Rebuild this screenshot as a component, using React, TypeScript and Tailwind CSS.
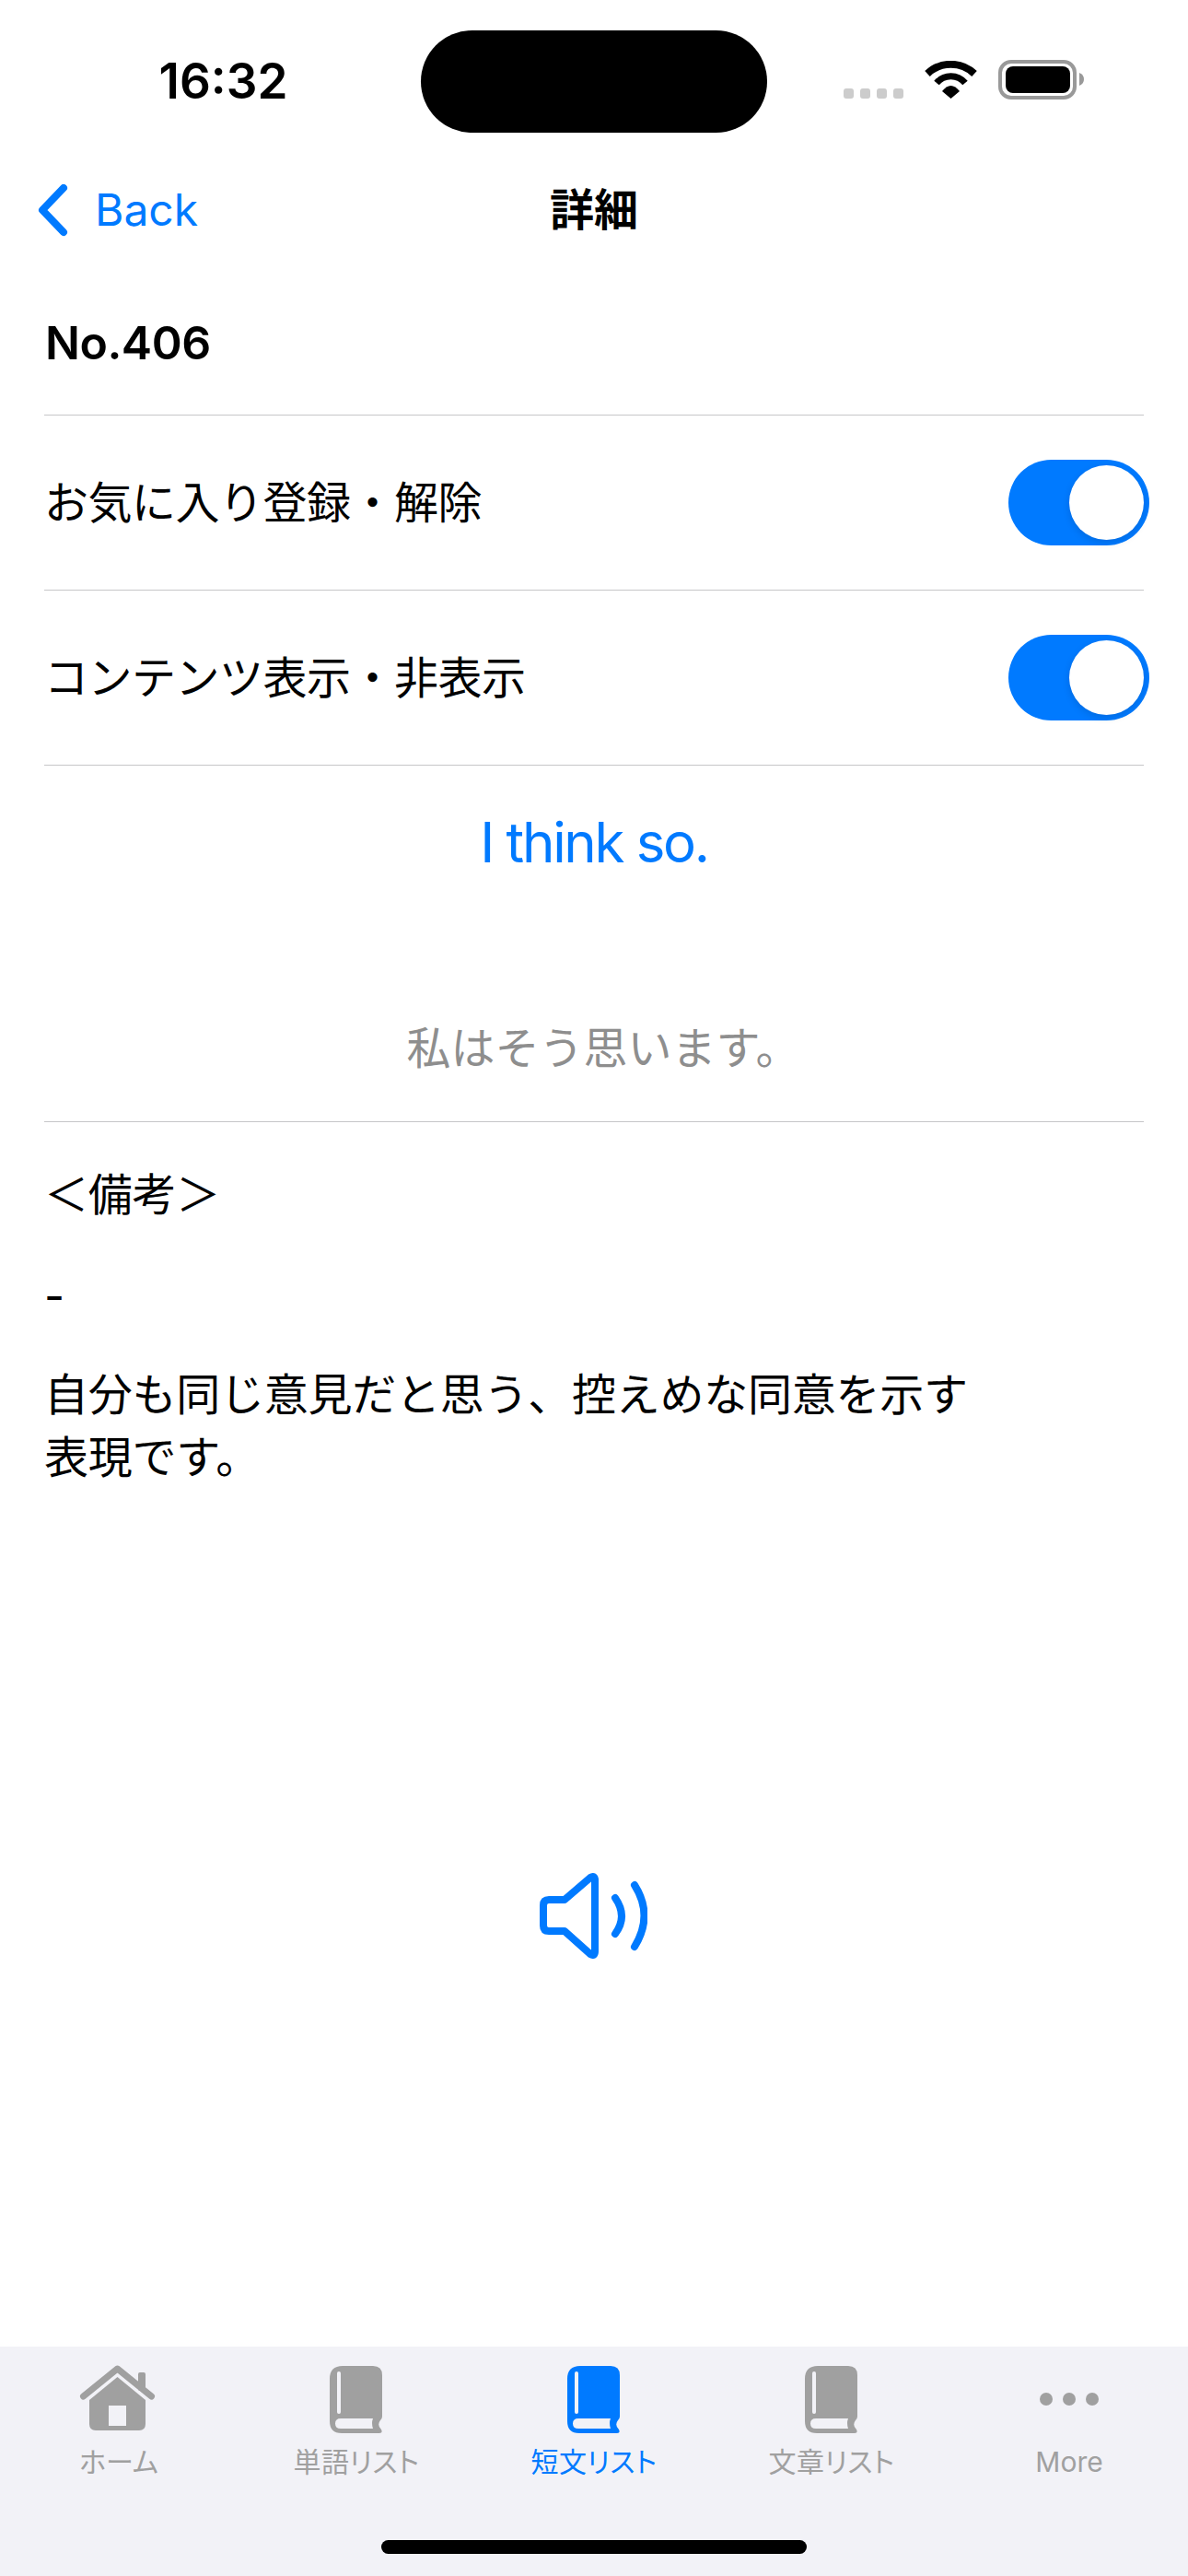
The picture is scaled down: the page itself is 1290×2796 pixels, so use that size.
import React from "react";

const JP = "font-['Inter','Noto_Sans_CJK_JP',sans-serif]";

const Toggle = () => (
  <div className="flex h-[93px] w-[153px] items-center justify-end rounded-full bg-[#007aff] pr-[6px]">
    <div className="h-[81px] w-[81px] rounded-full bg-white shadow-[0_3px_8px_rgba(0,0,0,0.12)]" />
  </div>
);

const Separator = () => <div className="h-px bg-[#c6c6c8]" />;

const BookIcon = ({ color }: { color: string }) => (
  <svg className="mr-[2px]" width="57" height="73" viewBox="0 0 57 73">
    <path
      d="M14 0H47Q57 0 57 10V55Q57 57 55 59Q51 64 56 69Q58 73 54 73H13Q0 73 0 60V14Q0 0 14 0Z"
      fill={color}
    />
    <rect x="8" y="6" width="4" height="46" rx="2" fill="#f2f2f7" />
    <path d="M12 57H47Q45 62 47 68H12Q6 68 6 62.5Q6 57 12 57Z" fill="#f2f2f7" />
  </svg>
);

const HomeIcon = () => (
  <svg width="86" height="76" viewBox="0 0 86 76" fill="#a0a0a0">
    <path d="M4.5 35L41.5 5L78.5 35" fill="none" stroke="#a0a0a0" strokeWidth="7" strokeLinecap="round" strokeLinejoin="round" />
    <rect x="64" y="9" width="8" height="20" rx="2" />
    <path d="M41.5 14L72 39V65Q72 72 65 72H18Q11 72 11 65V39Z" />
    <rect x="32" y="45" width="19" height="22" fill="#f2f2f7" />
  </svg>
);

const DotsIcon = () => (
  <svg width="64" height="14" viewBox="0 0 64 14" fill="#a0a0a0">
    <circle cx="7" cy="7" r="7" />
    <circle cx="32" cy="7" r="7" />
    <circle cx="57" cy="7" r="7" />
  </svg>
);

const tabs = [
  { label: "ホーム", icon: <HomeIcon />, color: "text-[#a0a0a0]" },
  { label: "単語リスト", icon: <BookIcon color="#a0a0a0" />, color: "text-[#a0a0a0] tracking-[0.5px]" },
  { label: "短文リスト", icon: <BookIcon color="#007aff" />, color: "text-[#007aff] tracking-[0.5px]" },
  { label: "文章リスト", icon: <BookIcon color="#a0a0a0" />, color: "text-[#a0a0a0] tracking-[0.5px]" },
  { label: "More", icon: <DotsIcon />, color: "text-[#a0a0a0]" },
];

export default function App() {
  return (
    <div className={`flex h-[2796px] w-[1290px] flex-col bg-white text-black ${JP}`}>
      {/* Status bar */}
      <div className="flex h-[176px] items-start">
        <div className="flex h-[177px] w-[457px] items-start justify-center pt-[49px] pl-[28px] text-[53px] leading-[78px] font-semibold">
          16:32
        </div>
        <div className="mt-[33px] h-[111px] w-[376px] rounded-full bg-black" />
        <div className="flex items-end pt-[65px] pl-[83px]">
          <div className="flex gap-[7px] pb-[1px]">
            <div className="h-[11px] w-[11px] rounded-[3px] bg-[#cccccc]" />
            <div className="h-[11px] w-[11px] rounded-[3px] bg-[#cccccc]" />
            <div className="h-[11px] w-[11px] rounded-[3px] bg-[#cccccc]" />
            <div className="h-[11px] w-[11px] rounded-[3px] bg-[#cccccc]" />
          </div>
          <svg className="mb-[1px] ml-[23px]" width="57" height="41" viewBox="0 0 57 41">
            <path d="M3 14A37 37 0 0 1 54 14" fill="none" stroke="#000" strokeWidth="8" />
            <path d="M13 24A20 20 0 0 1 44 24" fill="none" stroke="#000" strokeWidth="7" />
            <path d="M28.5 41L19 33Q28.5 21 38 33Z" fill="#000" />
          </svg>
          <svg className="ml-[23px]" width="93" height="43" viewBox="0 0 93 43">
            <rect x="2" y="2" width="81" height="39" rx="12" fill="none" stroke="#999999" strokeWidth="4" />
            <rect x="8" y="7" width="70" height="29" rx="8" fill="#000" />
            <path d="M88 14Q93 16 93 21Q93 26 88 28Z" fill="#999999" />
          </svg>
        </div>
      </div>

      {/* Nav bar */}
      <div className="grid h-[104px] grid-cols-3 items-center">
        <div className="flex items-center pl-[40px] text-[48px] text-[#007aff]">
          <svg width="34" height="57" viewBox="0 0 34 57">
            <path d="M29 4L6 28L29 52" fill="none" stroke="#007aff" strokeWidth="8" strokeLinecap="round" strokeLinejoin="round" />
          </svg>
          <span className="ml-[29px]">Back</span>
        </div>
        <div className="text-center text-[48px] font-bold">詳細</div>
      </div>

      {/* Content */}
      <div className="flex flex-1 flex-col px-[48px]">
        <div className="flex h-[170px] items-center pt-[14px] pl-[1px] text-[50px] font-semibold tracking-[-0.5px]">No.406</div>
        <Separator />
        <div className="flex h-[189px] items-center justify-between text-[48px] tracking-[-0.5px]">
          <span>お気に入り登録・解除</span>
          <div className="mr-[-6px]"><Toggle /></div>
        </div>
        <Separator />
        <div className="flex h-[189px] items-center justify-between text-[48px] tracking-[-0.5px]">
          <span>コンテンツ表示・非表示</span>
          <div className="mr-[-6px]"><Toggle /></div>
        </div>
        <Separator />
        <div className="pt-[43px] text-center text-[60px] leading-[80px] tracking-[-2.3px] text-[#007aff]">I think so.</div>
        <div className="pt-[148px] pl-[20px] text-center text-[48px] leading-[72px] text-[#8e8e8e]">私はそう思います。</div>
        <div className="h-[43px]" />
        <Separator />
        <div className="pt-[43px] text-[48px] leading-[72px] tracking-[-0.25px]">
          <p>＜備考＞</p>
          <p className="mt-[38px]">-</p>
          <p className="mt-[37px] leading-[68px]">
            自分も同じ意見だと思う、控えめな同意を示す
            <br />
            表現です。
          </p>
        </div>
        <div className="flex flex-1 items-center justify-center">
          <svg className="mt-[-4px] mr-[2px]" width="117" height="93" viewBox="0 0 117 93">
            <g fill="none" stroke="#007aff" strokeWidth="8" strokeLinecap="round" strokeLinejoin="round">
              <path d="M10 29H27L55 5Q60 2 60 8V85Q60 91 55 88L27 63H10Q4 63 4 57V35Q4 29 10 29Z" />
              <path d="M82 27Q96 47 82 66" />
              <path d="M103 13Q124 46 103 80" />
            </g>
          </svg>
        </div>
      </div>

      {/* Tab bar */}
      <div className="flex h-[249px] flex-col bg-[#f2f2f7]">
        <div className="grid grid-cols-5 pt-[20px]">
          {tabs.map((tab) => (
            <div key={tab.label} className="flex flex-col items-center">
              <div className="flex h-[74px] items-center justify-center">{tab.icon}</div>
              <span className={`mt-[11px] text-[30px] leading-[40px] [font-feature-settings:'palt'] ${tab.color}`}>
                {tab.label}
              </span>
            </div>
          ))}
        </div>
        <div className="mt-[65px] flex justify-center">
          <div className="h-[15px] w-[462px] rounded-full bg-black" />
        </div>
      </div>
    </div>
  );
}
